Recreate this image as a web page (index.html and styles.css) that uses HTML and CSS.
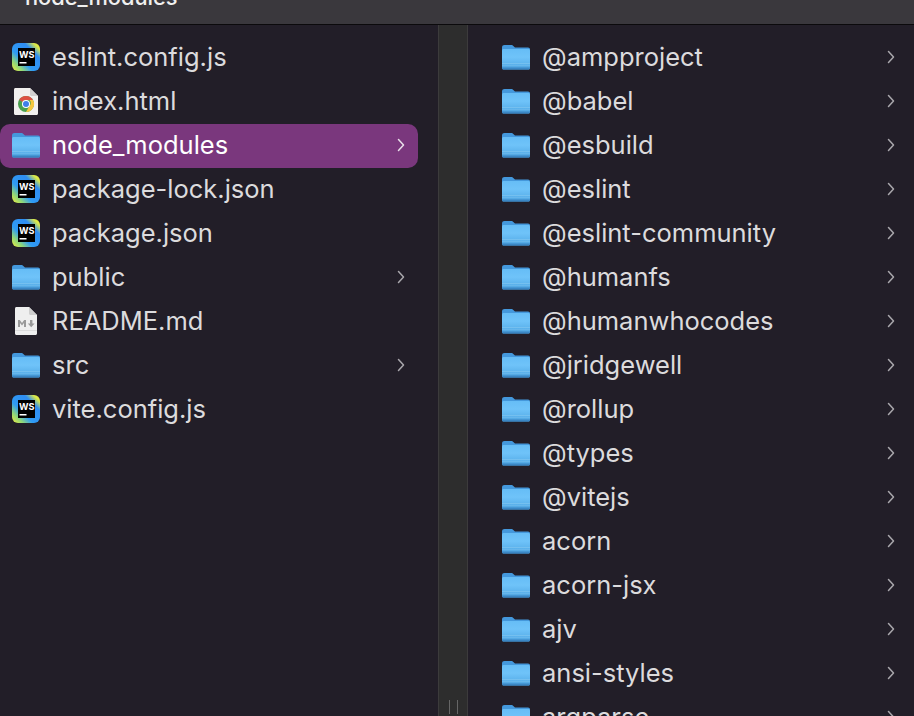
FILE: index.html
```html
<!DOCTYPE html>
<html lang="en">
<head>
<meta charset="utf-8">
<title>node_modules</title>
<link rel="stylesheet" href="styles.css">
</head>
<body>
<svg class="defs" width="0" height="0" aria-hidden="true">
  <defs>
    <linearGradient id="fbody" x1="0" y1="0" x2="0" y2="1">
      <stop offset="0" stop-color="#66bdf6"/>
      <stop offset="0.4" stop-color="#6fc3f9"/>
      <stop offset="0.75" stop-color="#5cb2ec"/>
      <stop offset="1" stop-color="#4b9fdb"/>
    </linearGradient>
    <linearGradient id="wsbg" x1="0" y1="1" x2="1" y2="0">
      <stop offset="0" stop-color="#f2ee3c"/>
      <stop offset="0.2" stop-color="#8fd87a"/>
      <stop offset="0.38" stop-color="#2f9bf5"/>
      <stop offset="0.72" stop-color="#2f8df2"/>
      <stop offset="0.88" stop-color="#d9e84a"/>
      <stop offset="1" stop-color="#f5ee3a"/>
    </linearGradient>
    <symbol id="folder" viewBox="0 0 28 26">
      <path d="M0 3.500C0 1.800 1 1 2.500 1H9c1.200 0 1.800.4 2.600 1.200L13 3.500h13c1.300 0 2 .8 2 2V8H0z" fill="#4498dc"/>
      <path d="M0 6.500C0 5.600.7 5 1.500 5h25c.8 0 1.500.6 1.500 1.500V24c0 .9-.7 1.500-1.500 1.500h-25C.7 25.500 0 24.900 0 24z" fill="url(#fbody)"/>
      <rect x="0" y="19" width="28" height="1" fill="#8ccbf2" opacity=".5"/>
      <rect x="0" y="21" width="28" height="1" fill="#8ccbf2" opacity=".3"/>
      <path d="M0 24c0 .9.700 1.500 1.500 1.500h25c.8 0 1.500-.6 1.500-1.500v-.6H0z" fill="#3a86c4"/>
    </symbol>
    <symbol id="ws" viewBox="0 0 28 28">
      <rect width="28" height="28" rx="6" fill="url(#wsbg)"/>
      <rect x="6" y="5" width="17" height="18" fill="#000"/>
      <text x="7" y="14.500" class="ws-text">WS</text>
      <rect x="7.500" y="19" width="7" height="1.500" fill="#fff"/>
    </symbol>
    <symbol id="chrome" viewBox="0 0 24 27">
      <path d="M0 1.500C0 .7.600 0 1.500 0H16l8 8v17.500c0 .9-.6 1.500-1.500 1.500h-21C.6 27 0 26.400 0 25.500z" fill="#f2f0ef"/>
      <path d="M16 0l8 8h-6.500C16.600 8 16 7.400 16 6.500z" fill="#d2d0d0"/>
      <circle cx="12" cy="16" r="8" fill="#4aa04e"/>
      <path d="M12 8a8 8 0 0 1 7 4H12a4 4 0 0 0-3.500 2L5.200 11.700A8 8 0 0 1 12 8z" fill="#dd5144"/>
      <path d="M19 12a8 8 0 0 1-7 12l3.400-6a4 4 0 0 0 0-6z" fill="#f5c73f"/>
      <circle cx="12" cy="16" r="4" fill="#fff"/>
      <circle cx="12" cy="16" r="3" fill="#3f7fe8"/>
    </symbol>
    <symbol id="md" viewBox="0 0 22 28">
      <path d="M0 1.500C0 .7.600 0 1.500 0H14l8 8v18.500c0 .9-.6 1.500-1.500 1.500h-19C.6 28 0 27.400 0 26.500z" fill="#efefef"/>
      <path d="M14 0l8 8h-6.500C14.600 8 14 7.400 14 6.500z" fill="#cfcfcf"/>
      <path d="M3 20v-7h1.800l2.200 3 2.200-3H11v7H9v-4l-2 2.600L5 16v4zM15 13h2.400v3.500h2.200l-3.400 3.800-3.400-3.800H15z" fill="#9a9a9a"/>
      <rect y="23" width="22" height="1" fill="#dcdcdc"/>
    </symbol>
    <symbol id="chev" viewBox="0 0 8 14">
      <path d="M1.500 1.500L6.500 7l-5 5.500" fill="none" stroke="currentColor" stroke-width="1.500" stroke-linecap="round" stroke-linejoin="round"/>
    </symbol>
  </defs>
</svg>
<div class="window">
  <header class="titlebar"><span class="title">node_modules</span></header>
  <main class="panes">
    <section class="pane pane-left">
      <div class="row"><svg class="icon"><use href="#ws"/></svg><span class="name">eslint.config.js</span></div>
      <div class="row"><svg class="icon icon-chrome"><use href="#chrome"/></svg><span class="name">index.html</span></div>
      <div class="row selected"><svg class="icon icon-folder"><use href="#folder"/></svg><span class="name">node_modules</span><svg class="chev"><use href="#chev"/></svg></div>
      <div class="row"><svg class="icon"><use href="#ws"/></svg><span class="name">package-lock.json</span></div>
      <div class="row"><svg class="icon"><use href="#ws"/></svg><span class="name">package.json</span></div>
      <div class="row"><svg class="icon icon-folder"><use href="#folder"/></svg><span class="name">public</span><svg class="chev"><use href="#chev"/></svg></div>
      <div class="row"><svg class="icon icon-md"><use href="#md"/></svg><span class="name">README.md</span></div>
      <div class="row"><svg class="icon icon-folder"><use href="#folder"/></svg><span class="name">src</span><svg class="chev"><use href="#chev"/></svg></div>
      <div class="row"><svg class="icon"><use href="#ws"/></svg><span class="name">vite.config.js</span></div>
    </section>
    <div class="divider"><span class="grip"></span><span class="grip"></span></div>
    <section class="pane pane-right">
      <div class="row"><svg class="icon icon-folder"><use href="#folder"/></svg><span class="name">@ampproject</span><svg class="chev"><use href="#chev"/></svg></div>
      <div class="row"><svg class="icon icon-folder"><use href="#folder"/></svg><span class="name">@babel</span><svg class="chev"><use href="#chev"/></svg></div>
      <div class="row"><svg class="icon icon-folder"><use href="#folder"/></svg><span class="name">@esbuild</span><svg class="chev"><use href="#chev"/></svg></div>
      <div class="row"><svg class="icon icon-folder"><use href="#folder"/></svg><span class="name">@eslint</span><svg class="chev"><use href="#chev"/></svg></div>
      <div class="row"><svg class="icon icon-folder"><use href="#folder"/></svg><span class="name">@eslint-community</span><svg class="chev"><use href="#chev"/></svg></div>
      <div class="row"><svg class="icon icon-folder"><use href="#folder"/></svg><span class="name">@humanfs</span><svg class="chev"><use href="#chev"/></svg></div>
      <div class="row"><svg class="icon icon-folder"><use href="#folder"/></svg><span class="name">@humanwhocodes</span><svg class="chev"><use href="#chev"/></svg></div>
      <div class="row"><svg class="icon icon-folder"><use href="#folder"/></svg><span class="name">@jridgewell</span><svg class="chev"><use href="#chev"/></svg></div>
      <div class="row"><svg class="icon icon-folder"><use href="#folder"/></svg><span class="name">@rollup</span><svg class="chev"><use href="#chev"/></svg></div>
      <div class="row"><svg class="icon icon-folder"><use href="#folder"/></svg><span class="name">@types</span><svg class="chev"><use href="#chev"/></svg></div>
      <div class="row"><svg class="icon icon-folder"><use href="#folder"/></svg><span class="name">@vitejs</span><svg class="chev"><use href="#chev"/></svg></div>
      <div class="row"><svg class="icon icon-folder"><use href="#folder"/></svg><span class="name">acorn</span><svg class="chev"><use href="#chev"/></svg></div>
      <div class="row"><svg class="icon icon-folder"><use href="#folder"/></svg><span class="name">acorn-jsx</span><svg class="chev"><use href="#chev"/></svg></div>
      <div class="row"><svg class="icon icon-folder"><use href="#folder"/></svg><span class="name">ajv</span><svg class="chev"><use href="#chev"/></svg></div>
      <div class="row"><svg class="icon icon-folder"><use href="#folder"/></svg><span class="name">ansi-styles</span><svg class="chev"><use href="#chev"/></svg></div>
      <div class="row"><svg class="icon icon-folder"><use href="#folder"/></svg><span class="name">argparse</span><svg class="chev"><use href="#chev"/></svg></div>
    </section>
  </main>
</div>
</body>
</html>
```
FILE: styles.css
```css
html, body {
  margin: 0;
  height: 100%;
  background: #221e28;
}
.defs { position: absolute; }
.ws-text {
  font: 700 9.2px "Inter", sans-serif;
  fill: #fff;
}
.window {
  width: 914px;
  height: 716px;
  display: flex;
  flex-direction: column;
  overflow: hidden;
  font-family: "Inter", "Liberation Sans", sans-serif;
}
.titlebar {
  height: 24px;
  flex: none;
  background: #3a383d;
  border-bottom: 1px solid #0b0a0c;
  padding-left: 25px;
  overflow: hidden;
  color: #f0f0f0;
  font-size: 21.8px;
  font-weight: 500;
  line-height: 24px;
}
.title {
  display: block;
  margin-top: -15px;
}
.panes {
  flex: 1;
  min-height: 0;
  display: flex;
}
.pane {
  overflow: hidden;
  padding-top: 11px;
  box-sizing: border-box;
}
.pane-left {
  width: 418px;
  margin-right: 20px;
  flex: none;
}
.divider {
  width: 28px;
  flex: none;
  background: #2d2d2d;
  border-left: 1px solid #3c3b3c;
  border-right: 1px solid #3c3b3c;
  display: flex;
  justify-content: center;
  align-items: flex-end;
  gap: 7px;
  padding-bottom: 2px;
}
.grip {
  width: 1px;
  height: 14px;
  background: #666;
}
.pane-right {
  flex: 1;
  min-width: 0;
  padding-left: 34px;
  padding-right: 19px;
}
.row {
  height: 44px;
  display: flex;
  align-items: center;
  color: #dcdbdd;
  font-size: 25.5px;
  letter-spacing: 0;
  white-space: nowrap;
}
.pane-left .row { padding: 0 13px 0 12px; }
.row.selected {
  background: #7a377d;
  border-radius: 10px;
  color: #fff;
}
.name { margin-bottom: 4px; }
.icon {
  width: 28px;
  height: 28px;
  flex: none;
  margin: 0 12px 2px 0;
}
.icon-folder { height: 26px; }
.icon-chrome { width: 24px; height: 27px; margin: 0 14px 2px 2px; }
.icon-md { width: 22px; height: 28px; margin: 0 15px 2px 3px; }
.chev {
  width: 8px;
  height: 14px;
  flex: none;
  margin: 0 0 2px auto;
  color: #a9a7ac;
}
.selected .chev { color: #e8dfe9; }
```
